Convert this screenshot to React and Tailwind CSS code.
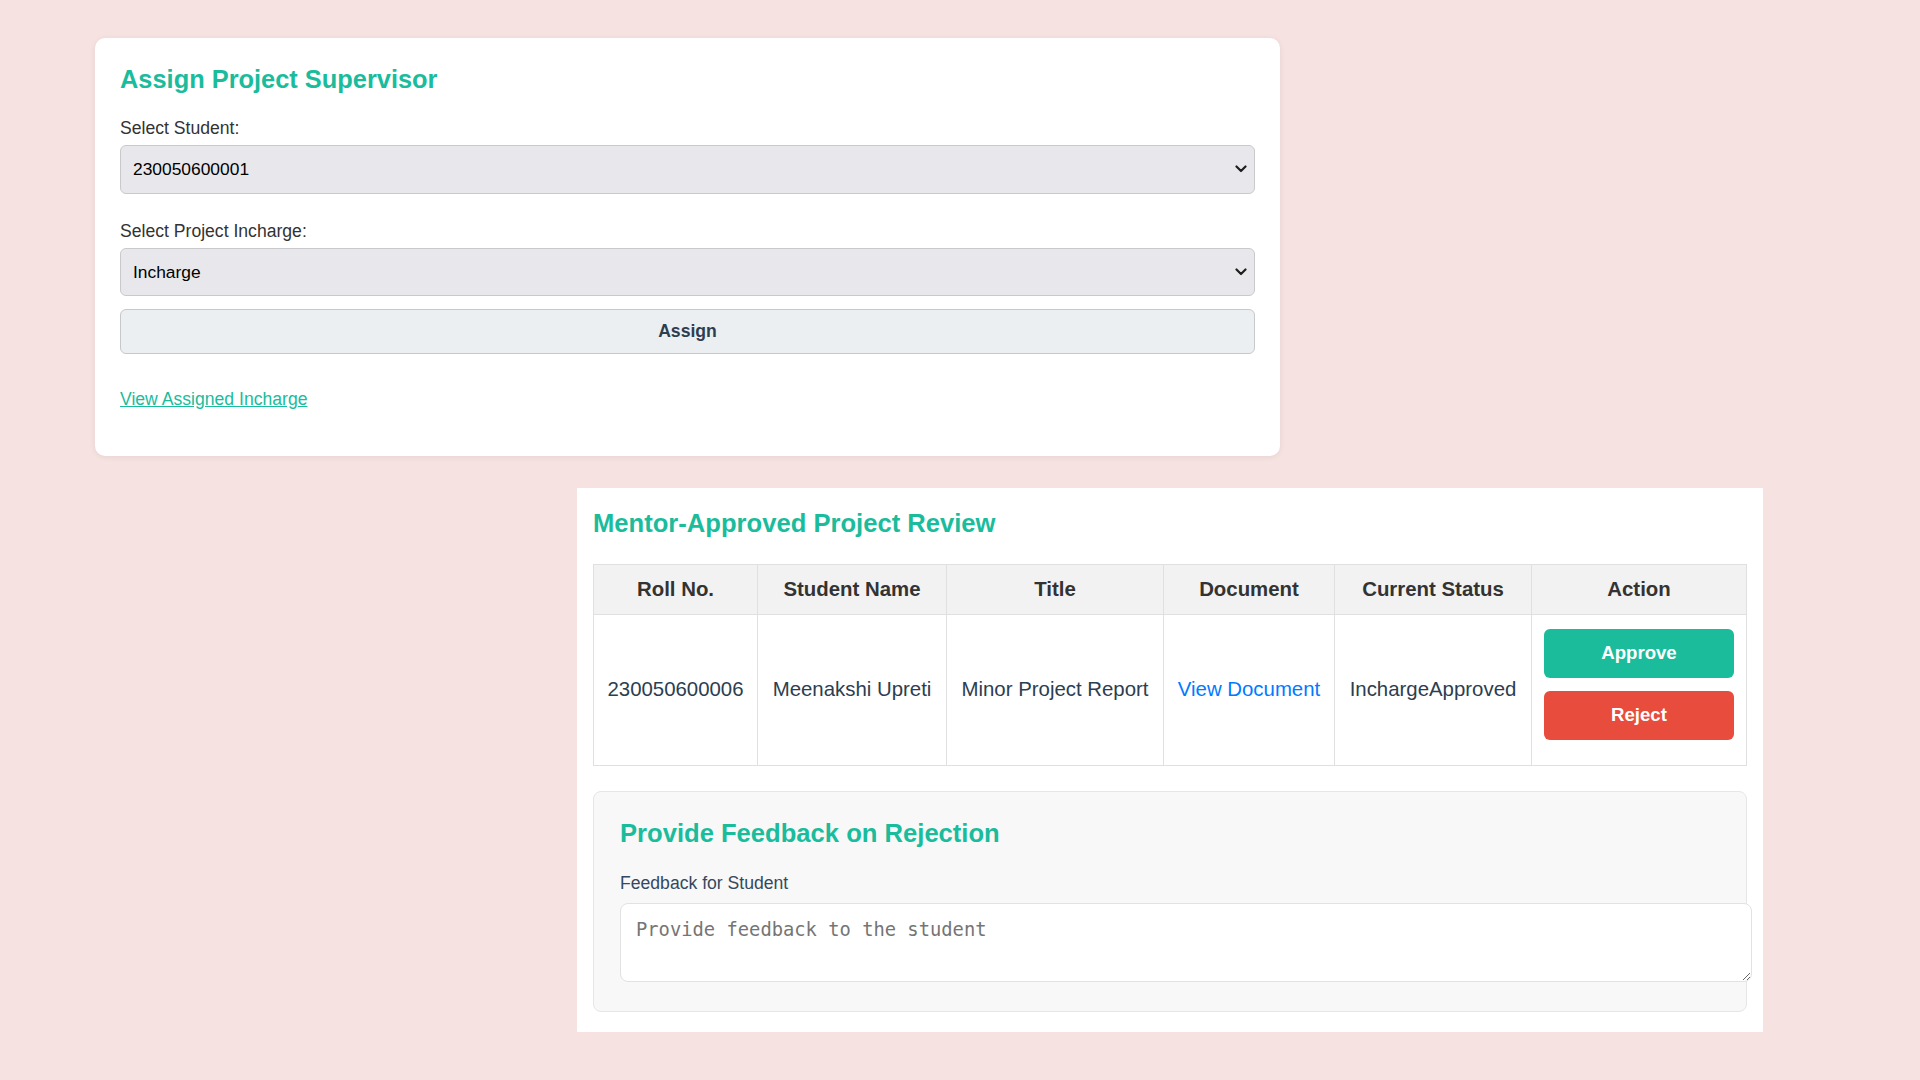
import React from 'react';

const FONT = { fontFamily: '"Liberation Sans", Arial, sans-serif' };

function Chevron() {
  return (
    <svg
      className="pointer-events-none absolute right-[8px] top-1/2 -translate-y-1/2"
      width="12"
      height="8"
      viewBox="0 0 12 8"
      fill="none"
    >
      <path d="M1.5 1.5 L6 6 L10.5 1.5" stroke="#1f1f1f" strokeWidth="2.2" strokeLinecap="round" strokeLinejoin="round" />
    </svg>
  );
}

function SelectField({ label, value, className }) {
  return (
    <div className={className}>
      <label className="block text-[17.6px] leading-[20px] text-[#333] mb-[7px]">{label}</label>
      <div className="relative">
        <select
          defaultValue={value}
          className="appearance-none w-full h-[48.5px] pl-[12px] pr-8 rounded-[6px] border border-[#c9c9cc] bg-[#e8e8ec] text-[17.4px] text-black outline-none"
          style={FONT}
        >
          <option value={value}>{value}</option>
        </select>
        <Chevron />
      </div>
    </div>
  );
}

const cols = [
  { name: 'Roll No.', w: 'w-[164px]' },
  { name: 'Student Name', w: 'w-[189px]' },
  { name: 'Title', w: 'w-[217px]' },
  { name: 'Document', w: 'w-[171px]' },
  { name: 'Current Status', w: 'w-[197px]' },
  { name: 'Action', w: '' },
];

export default function App() {
  return (
    <div className="min-h-screen bg-[#f6e2e1] pt-[38px] pb-[48px]" style={FONT}>
      {/* assign card */}
      <div className="ml-[95px] w-[1185px] bg-white rounded-[10px] shadow-[0_1px_6px_rgba(0,0,0,0.07)] pt-[26px] px-[25px] pb-[46px]">
        <h2 className="text-[25.4px] leading-[30px] font-bold text-[#1abc9c]">Assign Project Supervisor</h2>
        <SelectField className="mt-[24px]" label="Select Student:" value="230050600001" />
        <SelectField className="mt-[27px]" label="Select Project Incharge:" value="Incharge" />
        <button className="mt-[13px] w-full h-[44.5px] rounded-[6px] border border-[#c6c9cc] bg-[#eceff1] text-[17.6px] font-bold text-[#2c3e50]" style={FONT}>
          Assign
        </button>
        <div className="mt-[35px] leading-[20px]">
          <a href="#" className="text-[17.6px] text-[#1abc9c] underline">View Assigned Incharge</a>
        </div>
      </div>

      {/* review panel */}
      <div className="mt-[32px] ml-[577px] w-[1186px] bg-white px-[16px] pt-[20px] pb-[20px]">
        <h2 className="text-[25.6px] leading-[30px] font-bold text-[#1abc9c]">Mentor-Approved Project Review</h2>

        <table className="mt-[26px] w-full table-fixed border-collapse text-[20.4px]">
          <thead>
            <tr className="bg-[#f2f2f2]">
              {cols.map((c) => (
                <th key={c.name} className={`${c.w} h-[50px] border border-[#e0e0e0] px-3 text-center font-bold text-[#333]`}>
                  {c.name}
                </th>
              ))}
            </tr>
          </thead>
          <tbody>
            <tr className="text-[#2c3e50]">
              <td className="border border-[#e0e0e0] px-3 text-center align-middle">230050600006</td>
              <td className="border border-[#e0e0e0] px-3 text-center align-middle whitespace-nowrap">Meenakshi Upreti</td>
              <td className="border border-[#e0e0e0] px-3 text-center align-middle whitespace-nowrap">Minor Project Report</td>
              <td className="border border-[#e0e0e0] px-3 text-center align-middle whitespace-nowrap">
                <a href="#" className="text-[#007bff]">View Document</a>
              </td>
              <td className="border border-[#e0e0e0] px-3 text-center align-middle">InchargeApproved</td>
              <td className="border border-[#e0e0e0] px-3 pt-[14px] pb-[25px] align-top">
                <div className="flex flex-col gap-[13px]">
                  <button className="h-[49px] w-full rounded-[6px] bg-[#1abc9c] text-white font-bold text-[18.6px]" style={FONT}>Approve</button>
                  <button className="h-[49px] w-full rounded-[6px] bg-[#e74c3c] text-white font-bold text-[18.6px]" style={FONT}>Reject</button>
                </div>
              </td>
            </tr>
          </tbody>
        </table>

        <div className="mt-[25px] rounded-[8px] border border-[#e6e6e6] bg-[#f8f8f8] pt-[26px] px-[26px] pb-[29px]">
          <h3 className="text-[25.6px] leading-[30px] font-bold text-[#1abc9c]">Provide Feedback on Rejection</h3>
          <label className="mt-[25px] block text-[17.6px] leading-[20px] text-[#34495e]">Feedback for Student</label>
          <textarea
            className="mt-[10px] block box-content w-full h-[47px] px-[15px] py-[15px] rounded-[8px] border border-[#e2e2e2] bg-white text-[18.8px] leading-[22px] text-[#333] placeholder:text-[#757575] outline-none"
            style={{ fontFamily: '"DejaVu Sans Mono", "Liberation Mono", monospace' }}
            placeholder="Provide feedback to the student"
          />
        </div>
      </div>
    </div>
  );
}
